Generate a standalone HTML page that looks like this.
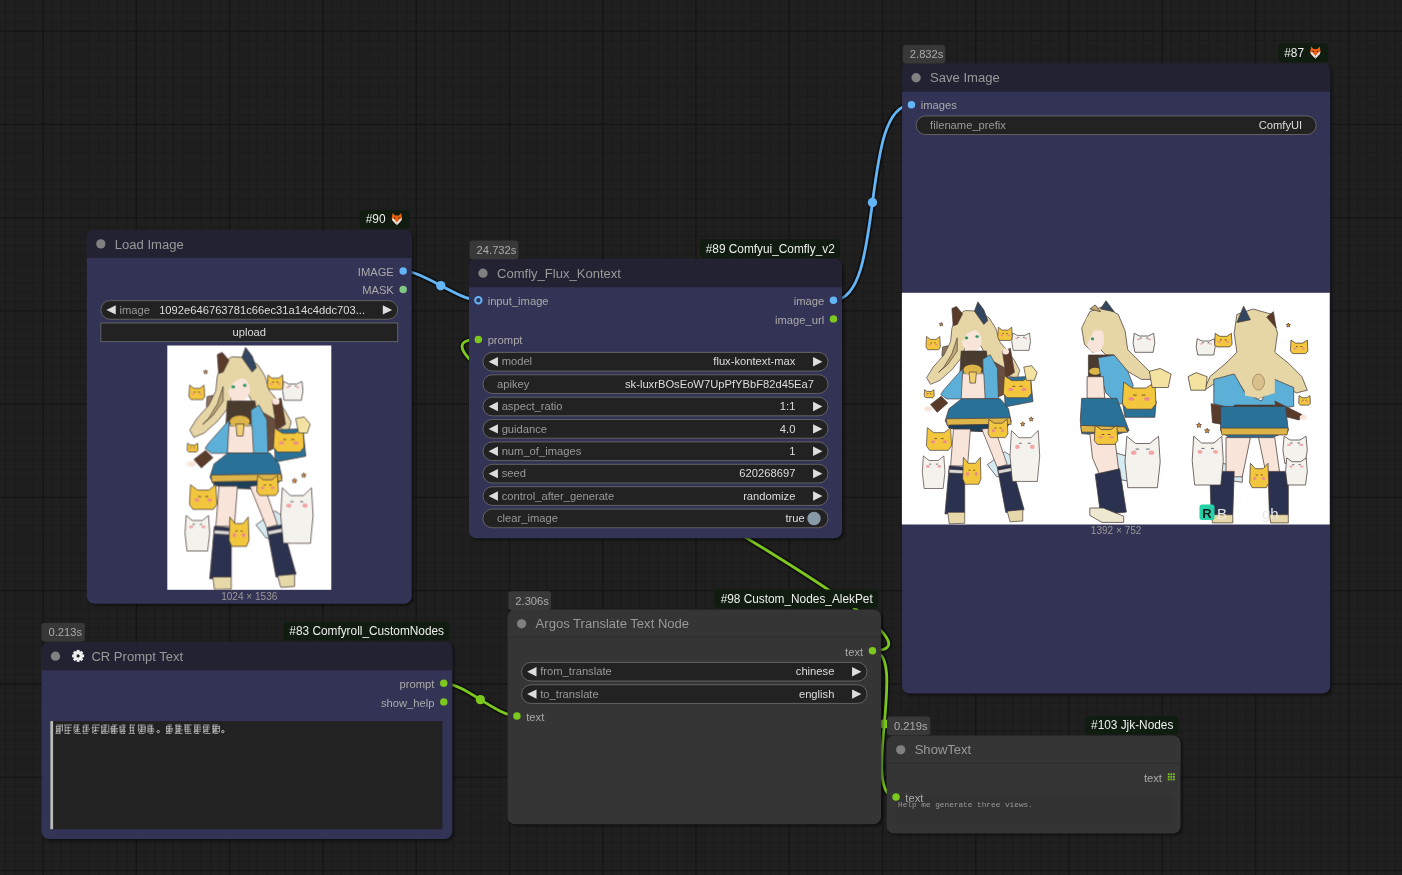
<!DOCTYPE html>
<html><head><meta charset="utf-8"><title>ComfyUI</title>
<style>html,body{margin:0;padding:0;background:#1f1f1f;overflow:hidden;width:1402px;height:875px}svg{display:block;will-change:transform}text{font-family:"Liberation Sans",sans-serif}.fig polygon{stroke:#4a3c3a;stroke-width:0.75;stroke-linejoin:round}</style>
</head><body>
<svg width="1402" height="875" viewBox="0 0 1402 875" font-family="Liberation Sans, sans-serif">
<defs><filter id="blur" x="-5%" y="-5%" width="110%" height="110%"><feGaussianBlur stdDeviation="1.4"/></filter><filter id="soft" x="-2%" y="-2%" width="104%" height="104%"><feGaussianBlur stdDeviation="0.45"/></filter></defs>
<rect x="0" y="0" width="1402" height="875" fill="#1f1f1f"/>
<path d="M5.49 0V875M14.82 0V875M24.15 0V875M33.47 0V875M52.13 0V875M61.45 0V875M70.78 0V875M80.11 0V875M89.44 0V875M98.76 0V875M108.09 0V875M117.42 0V875M126.74 0V875M145.40 0V875M154.72 0V875M164.05 0V875M173.38 0V875M182.70 0V875M192.03 0V875M201.36 0V875M210.69 0V875M220.01 0V875M238.67 0V875M247.99 0V875M257.32 0V875M266.65 0V875M275.98 0V875M285.30 0V875M294.63 0V875M303.96 0V875M313.28 0V875M331.94 0V875M341.26 0V875M350.59 0V875M359.92 0V875M369.25 0V875M378.57 0V875M387.90 0V875M397.23 0V875M406.55 0V875M425.21 0V875M434.53 0V875M443.86 0V875M453.19 0V875M462.51 0V875M471.84 0V875M481.17 0V875M490.50 0V875M499.82 0V875M518.48 0V875M527.80 0V875M537.13 0V875M546.46 0V875M555.79 0V875M565.11 0V875M574.44 0V875M583.77 0V875M593.09 0V875M611.75 0V875M621.07 0V875M630.40 0V875M639.73 0V875M649.06 0V875M658.38 0V875M667.71 0V875M677.04 0V875M686.36 0V875M705.02 0V875M714.34 0V875M723.67 0V875M733.00 0V875M742.33 0V875M751.65 0V875M760.98 0V875M770.31 0V875M779.63 0V875M798.29 0V875M807.61 0V875M816.94 0V875M826.27 0V875M835.60 0V875M844.92 0V875M854.25 0V875M863.58 0V875M872.90 0V875M891.56 0V875M900.88 0V875M910.21 0V875M919.54 0V875M928.87 0V875M938.19 0V875M947.52 0V875M956.85 0V875M966.17 0V875M984.83 0V875M994.15 0V875M1003.48 0V875M1012.81 0V875M1022.14 0V875M1031.46 0V875M1040.79 0V875M1050.12 0V875M1059.44 0V875M1078.10 0V875M1087.42 0V875M1096.75 0V875M1106.08 0V875M1115.40 0V875M1124.73 0V875M1134.06 0V875M1143.39 0V875M1152.71 0V875M1171.37 0V875M1180.69 0V875M1190.02 0V875M1199.35 0V875M1208.67 0V875M1218.00 0V875M1227.33 0V875M1236.66 0V875M1245.98 0V875M1264.64 0V875M1273.96 0V875M1283.29 0V875M1292.62 0V875M1301.94 0V875M1311.27 0V875M1320.60 0V875M1329.93 0V875M1339.25 0V875M1357.91 0V875M1367.23 0V875M1376.56 0V875M1385.89 0V875M1395.21 0V875M0 3.12H1402M0 12.45H1402M0 21.77H1402M0 40.43H1402M0 49.75H1402M0 59.08H1402M0 68.41H1402M0 77.73H1402M0 87.06H1402M0 96.39H1402M0 105.72H1402M0 115.04H1402M0 133.70H1402M0 143.02H1402M0 152.35H1402M0 161.68H1402M0 171.00H1402M0 180.33H1402M0 189.66H1402M0 198.99H1402M0 208.31H1402M0 226.97H1402M0 236.29H1402M0 245.62H1402M0 254.95H1402M0 264.28H1402M0 273.60H1402M0 282.93H1402M0 292.26H1402M0 301.58H1402M0 320.24H1402M0 329.56H1402M0 338.89H1402M0 348.22H1402M0 357.55H1402M0 366.87H1402M0 376.20H1402M0 385.53H1402M0 394.85H1402M0 413.51H1402M0 422.83H1402M0 432.16H1402M0 441.49H1402M0 450.81H1402M0 460.14H1402M0 469.47H1402M0 478.80H1402M0 488.12H1402M0 506.78H1402M0 516.10H1402M0 525.43H1402M0 534.76H1402M0 544.09H1402M0 553.41H1402M0 562.74H1402M0 572.07H1402M0 581.39H1402M0 600.05H1402M0 609.37H1402M0 618.70H1402M0 628.03H1402M0 637.36H1402M0 646.68H1402M0 656.01H1402M0 665.34H1402M0 674.66H1402M0 693.32H1402M0 702.64H1402M0 711.97H1402M0 721.30H1402M0 730.62H1402M0 739.95H1402M0 749.28H1402M0 758.61H1402M0 767.93H1402M0 786.59H1402M0 795.91H1402M0 805.24H1402M0 814.57H1402M0 823.89H1402M0 833.22H1402M0 842.55H1402M0 851.88H1402M0 861.20H1402" stroke="#1c1c1c" stroke-width="1" fill="none"/>
<path d="M43.10 0V875M0 31.10H1402M136.37 0V875M0 124.37H1402M229.64 0V875M0 217.64H1402M322.91 0V875M0 310.91H1402M416.18 0V875M0 404.18H1402M509.45 0V875M0 497.45H1402M602.72 0V875M0 590.72H1402M695.99 0V875M0 683.99H1402M789.26 0V875M0 777.26H1402M882.53 0V875M0 870.53H1402M975.80 0V875M1069.07 0V875M1162.34 0V875M1255.61 0V875M1348.88 0V875" stroke="#151515" stroke-width="1.3" fill="none"/>
<path d="M403.17 270.94C423.34 270.94 458.16 300.24 478.33 300.24" stroke="rgba(0,0,0,0.45)" stroke-width="6.53" fill="none" stroke-linecap="round"/>
<path d="M403.17 270.94C423.34 270.94 458.16 300.24 478.33 300.24" stroke="#64B5F6" stroke-width="2.80" fill="none" stroke-linecap="round"/>
<circle cx="440.75" cy="285.59" r="4.66" fill="#64B5F6"/>
<path d="M833.47 300.24C886.08 300.24 858.82 104.79 911.43 104.79" stroke="rgba(0,0,0,0.45)" stroke-width="6.53" fill="none" stroke-linecap="round"/>
<path d="M833.47 300.24C886.08 300.24 858.82 104.79 911.43 104.79" stroke="#64B5F6" stroke-width="2.80" fill="none" stroke-linecap="round"/>
<circle cx="872.45" cy="202.51" r="4.66" fill="#64B5F6"/>
<path d="M443.77 683.24C463.81 683.24 496.89 716.00 516.93 716.00" stroke="rgba(0,0,0,0.45)" stroke-width="6.53" fill="none" stroke-linecap="round"/>
<path d="M443.77 683.24C463.81 683.24 496.89 716.00 516.93 716.00" stroke="#7DC81E" stroke-width="2.80" fill="none" stroke-linecap="round"/>
<circle cx="480.35" cy="699.62" r="4.66" fill="#7DC81E"/>
<path d="M872.47 650.84C998.06 650.84 352.74 339.40 478.33 339.40" stroke="rgba(0,0,0,0.45)" stroke-width="6.53" fill="none" stroke-linecap="round"/>
<path d="M872.47 650.84C998.06 650.84 352.74 339.40 478.33 339.40" stroke="#7DC81E" stroke-width="2.80" fill="none" stroke-linecap="round"/>
<circle cx="675.40" cy="495.12" r="4.66" fill="#7DC81E"/>
<path d="M872.47 650.84C909.46 650.84 859.04 796.90 896.03 796.90" stroke="rgba(0,0,0,0.45)" stroke-width="6.53" fill="none" stroke-linecap="round"/>
<path d="M872.47 650.84C909.46 650.84 859.04 796.90 896.03 796.90" stroke="#7DC81E" stroke-width="2.80" fill="none" stroke-linecap="round"/>
<circle cx="884.25" cy="723.87" r="4.66" fill="#7DC81E"/>
<rect x="88.75" y="231.80" width="324.85" height="373.90" rx="7.46" fill="rgba(0,0,0,0.5)" filter="url(#blur)"/>
<rect x="86.85" y="229.90" width="324.85" height="373.90" rx="7.46" fill="#333355"/>
<path d="M86.85 257.88V237.36A7.46 7.46 0 0 1 94.31 229.90H404.24A7.46 7.46 0 0 1 411.70 237.36V257.88Z" fill="#222233"/>
<circle cx="100.84" cy="243.89" r="4.66" fill="#808080"/>
<text x="114.83" y="248.55" font-size="13.06" fill="#999">Load Image</text>
<circle cx="403.17" cy="270.94" r="3.73" fill="#64B5F6"/>
<text x="393.85" y="275.60" font-size="11.19" fill="#AAA" text-anchor="end">IMAGE</text>
<circle cx="403.17" cy="289.59" r="3.73" fill="#81C784"/>
<text x="393.85" y="294.26" font-size="11.19" fill="#AAA" text-anchor="end">MASK</text>
<rect x="100.84" y="300.60" width="296.87" height="18.65" rx="9.33" fill="#222" stroke="#666" stroke-width="0.93"/>
<path d="M115.76 305.26L106.44 309.93L115.76 314.59Z" fill="#DDD"/>
<path d="M382.79 305.26L392.11 309.93L382.79 314.59Z" fill="#DDD"/>
<text x="119.49" y="313.66" font-size="11.19" fill="#999">image</text>
<text x="365.07" y="313.66" font-size="11.19" fill="#DDD" text-anchor="end">1092e646763781c66ec31a14c4ddc703...</text>
<rect x="100.84" y="323.00" width="296.87" height="18.65" fill="#222" stroke="#666" stroke-width="0.93"/>
<text x="249.28" y="336.06" font-size="11.19" fill="#DDD" text-anchor="middle">upload</text>
<g><rect x="167.3" y="345.5" width="164.0" height="244.3" fill="#fff"/><svg x="167.3" y="345.5" width="164.0" height="244.3" overflow="hidden"><g transform="translate(-167.3 -345.5)"><g class="fig" filter="url(#soft)"><polygon points="207.1,396.7 212.9,395.3 213.6,411.2 208.6,415.6 206.4,405.4" fill="#8a7460" /><polygon points="221.6,363.3 231.8,356.8 246.3,357.5 257.9,364.8 265.2,376.4 269.5,390.9 278.2,401.1 285.5,411.2 291.3,422.1 288.4,431.6 276.8,427.2 265.2,415.6 255.0,406.9 246.3,390.9 233.2,390.9 228.9,406.9 217.3,421.4 204.2,433.0 194.0,437.4 189.7,430.1 196.9,418.5 208.6,405.4 215.8,390.9 217.3,376.4" fill="#e6d6a6" stroke="#6a5a40" stroke-width="0.5"/><polygon points="223.1,386.6 217.3,404.0 208.6,418.5 202.7,424.3 212.9,415.6 223.1,401.1" fill="#bfa874" /><polygon points="217.3,354.6 222.3,352.4 228.9,360.4 223.1,372.0 218.7,373.5" fill="#5a3b2b" /><polygon points="241.9,357.5 245.6,347.4 252.1,356.1 256.5,367.7 252.1,372.0" fill="#33465e" /><ellipse cx="239.0" cy="389.5" rx="10.9" ry="12.3" fill="#f8e4d8" /><polygon points="226.0,379.3 234.7,367.7 246.3,367.7 255.0,376.4 257.9,389.5 252.1,382.2 246.3,377.8 240.5,378.6 233.2,382.2 228.9,390.9" fill="#e6d6a6" style="stroke:none"/><ellipse cx="233.2" cy="386.8" rx="1.9" ry="1.6" fill="#2f9a68" /><ellipse cx="244.8" cy="385.3" rx="1.9" ry="1.6" fill="#2f9a68" /><polygon points="227.4,401.0 255.0,401.0 257.9,424.3 226.0,424.3" fill="#4a3a2e" /><polygon points="208.6,443.2 228.9,420.3 231.8,453.3 211.5,453.3 205.1,448.5" fill="#5bb0d8" stroke="#245c80" stroke-width="0.6"/><polygon points="262.0,412.0 276.0,420.0 277.0,447.0 266.0,452.0" fill="#6a5040" /><polygon points="251.0,410.0 259.0,405.0 267.0,420.0 268.0,453.0 252.0,453.0" fill="#5bb0d8" stroke="#245c80" stroke-width="0.6"/><polygon points="228.9,425.8 252.1,425.8 253.6,453.3 227.4,453.3" fill="#f8e4d8" /><ellipse cx="239.8" cy="421.4" rx="10.0" ry="5.8" fill="#dcb446" /><polygon points="236.0,424.0 244.0,424.0 243.0,436.0 237.0,436.0" fill="#f0d070" /><polygon points="272.4,401.0 281.1,398.2 285.5,424.3 276.8,430.1" fill="#5a3b2b" /><ellipse cx="276.0" cy="401.5" rx="3.6" ry="3.2" fill="#f8e4d8" /><polygon points="194.0,459.4 205.6,450.4 212.9,457.7 201.3,467.9" fill="#5a3b2b" /><ellipse cx="191.6" cy="464.0" rx="4.5" ry="2.8" fill="#f8e4d8" /><polygon points="273.9,430.1 302.9,428.7 305.8,456.2 275.3,462.0" fill="#2a7198" /><polygon points="274.5,428.0 282.5,433.3 295.0,433.3 303.0,428.0 304.1,447.2 300.1,452.0 277.4,452.0 273.4,447.2" fill="#f2c63e" stroke="#a0782a" stroke-width="0.6"/><ellipse cx="281.6" cy="442.9" rx="2.6" ry="1.7" fill="#ee8c8c" /><ellipse cx="295.9" cy="442.9" rx="2.6" ry="1.7" fill="#ee8c8c" /><path d="M283.1 439.5h3.4M291.0 439.5h3.4" stroke="#5a3a18" stroke-width="0.8"/><polygon points="228.0,453.0 270.0,453.0 279.0,464.0 282.0,478.0 276.0,486.0 258.0,489.0 231.0,488.0 214.0,485.0 210.0,477.0 214.0,464.0" fill="#2a7198" stroke="#1d4a6c" stroke-width="0.6"/><polygon points="211.0,475.0 281.0,474.0 282.0,481.0 212.0,482.0" fill="#dcb446" /><polygon points="215.0,482.0 278.0,481.0 276.0,486.0 258.0,489.0 231.0,488.0 214.0,485.0" fill="#1f3f5a" /><polygon points="256.0,525.0 275.0,510.9 288.4,520.0 286.0,540.2 266.0,538.0" fill="#d6eaf2" /><polygon points="219.0,486.2 237.5,486.2 234.4,526.3 215.9,526.3" fill="#f8e4d8" /><polygon points="249.9,486.2 263.7,484.7 277.6,524.8 266.8,527.9" fill="#f8e4d8" /><polygon points="214.4,526.3 231.3,527.9 231.3,577.2 209.7,578.8" fill="#2a3350" /><polygon points="266.8,527.9 282.2,524.8 296.1,574.2 276.1,577.2" fill="#2a3350" /><polygon points="214.4,530.0 231.3,531.0 231.3,535.0 214.0,534.0" fill="#d8d8d8" /><polygon points="267.5,531.0 283.0,528.0 284.0,532.0 268.5,535.0" fill="#d8d8d8" /><polygon points="212.8,577.0 231.3,577.0 231.3,589.0 214.4,589.5" fill="#e6d8a8" /><polygon points="277.6,575.7 294.6,574.2 294.6,586.5 280.7,587.3" fill="#e6d8a8" /><polygon points="189.6,385.1 193.7,388.3 200.0,388.3 204.1,385.1 204.7,396.7 202.7,399.6 191.0,399.6 189.0,396.7" fill="#f2c63e" stroke="#a0782a" stroke-width="0.6"/><ellipse cx="193.2" cy="394.1" rx="1.3" ry="1.0" fill="#ee8c8c" /><ellipse cx="200.5" cy="394.1" rx="1.3" ry="1.0" fill="#ee8c8c" /><path d="M193.9 392.1h1.7M198.0 392.1h1.7" stroke="#5a3a18" stroke-width="0.8"/><polygon points="268.0,375.0 272.1,378.2 278.5,378.2 282.6,375.0 283.2,386.6 281.1,389.5 269.5,389.5 267.4,386.6" fill="#f2c63e" stroke="#a0782a" stroke-width="0.6"/><ellipse cx="271.6" cy="384.0" rx="1.3" ry="1.0" fill="#ee8c8c" /><ellipse cx="279.0" cy="384.0" rx="1.3" ry="1.0" fill="#ee8c8c" /><path d="M272.4 382.0h1.8M276.5 382.0h1.8" stroke="#5a3a18" stroke-width="0.8"/><polygon points="283.6,381.4 288.7,384.0 296.9,384.0 302.0,381.4 303.0,390.9 301.4,400.3 284.2,400.3 282.6,390.9" fill="#f4f2ec" stroke="#9aa6b0" stroke-width="0.6"/><ellipse cx="287.7" cy="387.4" rx="1.6" ry="0.8" fill="#f2a5a5" /><ellipse cx="297.9" cy="387.4" rx="1.6" ry="0.8" fill="#f2a5a5" /><path d="M288.7 386.1h2.0M294.8 386.1h2.0" stroke="#445" stroke-width="0.8"/><polygon points="187.5,443.2 190.3,445.1 194.8,445.1 197.6,443.2 198.0,450.2 196.6,451.9 188.5,451.9 187.1,450.2" fill="#f2c63e" stroke="#a0782a" stroke-width="0.6"/><ellipse cx="190.0" cy="448.6" rx="0.9" ry="0.6" fill="#ee8c8c" /><ellipse cx="195.1" cy="448.6" rx="0.9" ry="0.6" fill="#ee8c8c" /><path d="M190.5 447.4h1.2M193.4 447.4h1.2" stroke="#5a3a18" stroke-width="0.8"/><polygon points="295.7,418.5 304.4,417.0 310.2,424.3 307.3,433.0 298.6,433.0" fill="#f4e2a0" stroke="#b8a060" stroke-width="0.5"/><polygon points="205.6,369.8 206.2,371.2 207.7,371.3 206.5,372.3 206.9,373.8 205.6,373.0 204.3,373.8 204.7,372.3 203.5,371.3 205.0,371.2" fill="#f29a2e" /><polygon points="190.5,484.7 197.6,490.1 208.8,490.1 215.9,484.7 216.9,504.5 213.4,509.4 193.0,509.4 189.5,504.5" fill="#f2c63e" stroke="#a0782a" stroke-width="0.6"/><ellipse cx="196.8" cy="500.0" rx="2.3" ry="1.7" fill="#ee8c8c" /><ellipse cx="209.6" cy="500.0" rx="2.3" ry="1.7" fill="#ee8c8c" /><path d="M198.1 496.6h3.0M205.2 496.6h3.0" stroke="#5a3a18" stroke-width="0.8"/><polygon points="186.2,515.5 192.4,520.5 202.3,520.5 208.5,515.5 209.7,533.2 207.7,551.0 187.0,551.0 185.0,533.2" fill="#f4f2ec" stroke="#9aa6b0" stroke-width="0.6"/><ellipse cx="191.2" cy="526.9" rx="2.0" ry="1.4" fill="#f2a5a5" /><ellipse cx="203.5" cy="526.9" rx="2.0" ry="1.4" fill="#f2a5a5" /><path d="M192.4 524.4h2.5M199.8 524.4h2.5" stroke="#445" stroke-width="0.8"/><polygon points="229.8,517.0 235.0,523.5 243.1,523.5 248.3,517.0 249.0,540.5 246.5,546.4 231.7,546.4 229.1,540.5" fill="#f2c63e" stroke="#a0782a" stroke-width="0.6"/><ellipse cx="234.4" cy="535.2" rx="1.7" ry="2.1" fill="#ee8c8c" /><ellipse cx="243.7" cy="535.2" rx="1.7" ry="2.1" fill="#ee8c8c" /><path d="M235.4 531.1h2.2M240.5 531.1h2.2" stroke="#5a3a18" stroke-width="0.8"/><polygon points="282.3,487.8 290.4,495.6 303.4,495.6 311.5,487.8 313.1,515.5 310.5,543.3 283.3,543.3 280.7,515.5" fill="#f4f2ec" stroke="#9aa6b0" stroke-width="0.6"/><ellipse cx="288.8" cy="505.6" rx="2.6" ry="2.2" fill="#f2a5a5" /><ellipse cx="305.0" cy="505.6" rx="2.6" ry="2.2" fill="#f2a5a5" /><path d="M290.4 501.7h3.2M300.1 501.7h3.2" stroke="#445" stroke-width="0.8"/><polygon points="257.6,475.4 263.2,479.8 272.0,479.8 277.6,475.4 278.4,491.5 275.6,495.5 259.6,495.5 256.8,491.5" fill="#f2c63e" stroke="#a0782a" stroke-width="0.6"/><ellipse cx="262.6" cy="487.9" rx="1.8" ry="1.4" fill="#ee8c8c" /><ellipse cx="272.6" cy="487.9" rx="1.8" ry="1.4" fill="#ee8c8c" /><path d="M263.6 485.0h2.4M269.2 485.0h2.4" stroke="#5a3a18" stroke-width="0.8"/><polygon points="294.6,478.2 295.3,479.9 297.1,480.0 295.7,481.2 296.1,482.9 294.6,482.0 293.1,482.9 293.5,481.2 292.1,480.0 293.9,479.9" fill="#f29a2e" /><polygon points="303.8,472.8 304.5,474.5 306.3,474.6 304.9,475.8 305.3,477.5 303.8,476.6 302.3,477.5 302.7,475.8 301.3,474.6 303.1,474.5" fill="#f29a2e" /></g></g></svg></g>
<text x="249.28" y="599.5" font-size="10.07" fill="#999" text-anchor="middle">1024 × 1536</text>
<rect x="359.93" y="210.00" width="49.77" height="18.65" rx="4" fill="#0f1c0f"/>
<text x="365.73" y="223.30" font-size="11.85" fill="#EEE">#90</text>
<polygon points="392.60,213.00 395.10,215.60 398.70,215.60 401.20,213.00 402.00,218.00 401.30,220.40 396.90,225.30 392.50,220.40 391.80,218.00" fill="#e8600e"/>
<polygon points="391.80,218.20 394.10,219.10 395.70,221.00 396.90,222.40 398.10,221.00 399.70,219.10 402.00,218.20 401.30,220.60 396.90,225.30 392.50,220.60" fill="#e4e4ea"/>
<circle cx="394.80" cy="218.00" r="0.7" fill="#3a1a08"/>
<circle cx="399.00" cy="218.00" r="0.7" fill="#3a1a08"/>
<polygon points="396.00,223.80 397.80,223.80 396.90,225.30" fill="#666"/>
<rect x="470.90" y="261.10" width="373.00" height="279.10" rx="7.46" fill="rgba(0,0,0,0.5)" filter="url(#blur)"/>
<rect x="469.00" y="259.20" width="373.00" height="279.10" rx="7.46" fill="#333355"/>
<path d="M469.00 287.18V266.66A7.46 7.46 0 0 1 476.46 259.20H834.54A7.46 7.46 0 0 1 842.00 266.66V287.18Z" fill="#222233"/>
<circle cx="482.99" cy="273.19" r="4.66" fill="#808080"/>
<text x="496.98" y="277.85" font-size="13.06" fill="#999">Comfly_Flux_Kontext</text>
<circle cx="478.33" cy="300.24" r="3.20" fill="none" stroke="#64B5F6" stroke-width="2"/>
<text x="487.65" y="304.90" font-size="11.19" fill="#AAA">input_image</text>
<circle cx="478.33" cy="339.40" r="3.73" fill="#7DC81E"/>
<text x="487.65" y="344.06" font-size="11.19" fill="#AAA">prompt</text>
<circle cx="833.47" cy="300.24" r="3.73" fill="#64B5F6"/>
<text x="824.15" y="304.90" font-size="11.19" fill="#AAA" text-anchor="end">image</text>
<circle cx="833.47" cy="318.89" r="3.73" fill="#7DC81E"/>
<text x="824.15" y="323.56" font-size="11.19" fill="#AAA" text-anchor="end">image_url</text>
<rect x="482.99" y="352.40" width="345.02" height="18.65" rx="9.33" fill="#222" stroke="#666" stroke-width="0.93"/>
<path d="M497.91 357.06L488.59 361.73L497.91 366.39Z" fill="#DDD"/>
<path d="M813.09 357.06L822.41 361.73L813.09 366.39Z" fill="#DDD"/>
<text x="501.64" y="365.46" font-size="11.19" fill="#999">model</text>
<text x="795.37" y="365.46" font-size="11.19" fill="#DDD" text-anchor="end">flux-kontext-max</text>
<rect x="482.99" y="374.78" width="345.02" height="18.65" rx="9.33" fill="#222" stroke="#666" stroke-width="0.93"/>
<text x="496.98" y="387.84" font-size="11.19" fill="#999">apikey</text>
<text x="814.02" y="387.84" font-size="11.19" fill="#DDD" text-anchor="end">sk-luxrBOsEoW7UpPfYBbF82d45Ea7</text>
<rect x="482.99" y="397.17" width="345.02" height="18.65" rx="9.33" fill="#222" stroke="#666" stroke-width="0.93"/>
<path d="M497.91 401.83L488.59 406.50L497.91 411.16Z" fill="#DDD"/>
<path d="M813.09 401.83L822.41 406.50L813.09 411.16Z" fill="#DDD"/>
<text x="501.64" y="410.23" font-size="11.19" fill="#999">aspect_ratio</text>
<text x="795.37" y="410.23" font-size="11.19" fill="#DDD" text-anchor="end">1:1</text>
<rect x="482.99" y="419.55" width="345.02" height="18.65" rx="9.33" fill="#222" stroke="#666" stroke-width="0.93"/>
<path d="M497.91 424.22L488.59 428.88L497.91 433.54Z" fill="#DDD"/>
<path d="M813.09 424.22L822.41 428.88L813.09 433.54Z" fill="#DDD"/>
<text x="501.64" y="432.61" font-size="11.19" fill="#999">guidance</text>
<text x="795.37" y="432.61" font-size="11.19" fill="#DDD" text-anchor="end">4.0</text>
<rect x="482.99" y="441.94" width="345.02" height="18.65" rx="9.33" fill="#222" stroke="#666" stroke-width="0.93"/>
<path d="M497.91 446.60L488.59 451.27L497.91 455.93Z" fill="#DDD"/>
<path d="M813.09 446.60L822.41 451.27L813.09 455.93Z" fill="#DDD"/>
<text x="501.64" y="455.00" font-size="11.19" fill="#999">num_of_images</text>
<text x="795.37" y="455.00" font-size="11.19" fill="#DDD" text-anchor="end">1</text>
<rect x="482.99" y="464.32" width="345.02" height="18.65" rx="9.33" fill="#222" stroke="#666" stroke-width="0.93"/>
<path d="M497.91 468.99L488.59 473.65L497.91 478.31Z" fill="#DDD"/>
<path d="M813.09 468.99L822.41 473.65L813.09 478.31Z" fill="#DDD"/>
<text x="501.64" y="477.38" font-size="11.19" fill="#999">seed</text>
<text x="795.37" y="477.38" font-size="11.19" fill="#DDD" text-anchor="end">620268697</text>
<rect x="482.99" y="486.71" width="345.02" height="18.65" rx="9.33" fill="#222" stroke="#666" stroke-width="0.93"/>
<path d="M497.91 491.37L488.59 496.04L497.91 500.70Z" fill="#DDD"/>
<path d="M813.09 491.37L822.41 496.04L813.09 500.70Z" fill="#DDD"/>
<text x="501.64" y="499.77" font-size="11.19" fill="#999">control_after_generate</text>
<text x="795.37" y="499.77" font-size="11.19" fill="#DDD" text-anchor="end">randomize</text>
<rect x="482.99" y="509.09" width="345.02" height="18.65" rx="9.33" fill="#222" stroke="#666" stroke-width="0.93"/>
<circle cx="814.02" cy="518.42" r="6.72" fill="#89A"/>
<text x="496.98" y="522.15" font-size="11.19" fill="#999">clear_image</text>
<text x="804.69" y="522.15" font-size="11.19" fill="#DDD" text-anchor="end">true</text>
<rect x="469.60" y="240.60" width="49.00" height="18.65" rx="3" fill="#383838"/>
<text x="476.60" y="253.80" font-size="11.2" fill="#AAA">24.732s</text>
<rect x="699.92" y="239.30" width="140.08" height="18.65" rx="4" fill="#0f1c0f"/>
<text x="705.72" y="252.60" font-size="11.85" fill="#EEE">#89 Comfyui_Comfly_v2</text>
<rect x="904.00" y="65.65" width="428.10" height="629.75" rx="7.46" fill="rgba(0,0,0,0.5)" filter="url(#blur)"/>
<rect x="902.10" y="63.75" width="428.10" height="629.75" rx="7.46" fill="#333355"/>
<path d="M902.10 91.73V71.21A7.46 7.46 0 0 1 909.56 63.75H1322.74A7.46 7.46 0 0 1 1330.20 71.21V91.73Z" fill="#222233"/>
<circle cx="916.09" cy="77.74" r="4.66" fill="#808080"/>
<text x="930.08" y="82.40" font-size="13.06" fill="#999">Save Image</text>
<circle cx="911.43" cy="104.79" r="3.73" fill="#64B5F6"/>
<text x="920.75" y="109.45" font-size="11.19" fill="#AAA">images</text>
<rect x="916.09" y="115.90" width="400.12" height="18.65" rx="9.33" fill="#222" stroke="#666" stroke-width="0.93"/>
<text x="930.08" y="128.96" font-size="11.19" fill="#999">filename_prefix</text>
<text x="1302.22" y="128.96" font-size="11.19" fill="#DDD" text-anchor="end">ComfyUI</text>
<g><rect x="901.9" y="292.8" width="427.8" height="231.7" fill="#fff"/><g class="fig" filter="url(#soft)"><g transform="matrix(0.91659 0 0 0.91659 752.73 -16.55)"><polygon points="207.1,396.7 212.9,395.3 213.6,411.2 208.6,415.6 206.4,405.4" fill="#8a7460" /><polygon points="221.6,363.3 231.8,356.8 246.3,357.5 257.9,364.8 265.2,376.4 269.5,390.9 278.2,401.1 285.5,411.2 291.3,422.1 288.4,431.6 276.8,427.2 265.2,415.6 255.0,406.9 246.3,390.9 233.2,390.9 228.9,406.9 217.3,421.4 204.2,433.0 194.0,437.4 189.7,430.1 196.9,418.5 208.6,405.4 215.8,390.9 217.3,376.4" fill="#e6d6a6" stroke="#6a5a40" stroke-width="0.5"/><polygon points="223.1,386.6 217.3,404.0 208.6,418.5 202.7,424.3 212.9,415.6 223.1,401.1" fill="#bfa874" /><polygon points="217.3,354.6 222.3,352.4 228.9,360.4 223.1,372.0 218.7,373.5" fill="#5a3b2b" /><polygon points="241.9,357.5 245.6,347.4 252.1,356.1 256.5,367.7 252.1,372.0" fill="#33465e" /><ellipse cx="239.0" cy="389.5" rx="10.9" ry="12.3" fill="#f8e4d8" /><polygon points="226.0,379.3 234.7,367.7 246.3,367.7 255.0,376.4 257.9,389.5 252.1,382.2 246.3,377.8 240.5,378.6 233.2,382.2 228.9,390.9" fill="#e6d6a6" style="stroke:none"/><ellipse cx="233.2" cy="386.8" rx="1.9" ry="1.6" fill="#2f9a68" /><ellipse cx="244.8" cy="385.3" rx="1.9" ry="1.6" fill="#2f9a68" /><polygon points="227.4,401.0 255.0,401.0 257.9,424.3 226.0,424.3" fill="#4a3a2e" /><polygon points="208.6,443.2 228.9,420.3 231.8,453.3 211.5,453.3 205.1,448.5" fill="#5bb0d8" stroke="#245c80" stroke-width="0.6"/><polygon points="262.0,412.0 276.0,420.0 277.0,447.0 266.0,452.0" fill="#6a5040" /><polygon points="251.0,410.0 259.0,405.0 267.0,420.0 268.0,453.0 252.0,453.0" fill="#5bb0d8" stroke="#245c80" stroke-width="0.6"/><polygon points="228.9,425.8 252.1,425.8 253.6,453.3 227.4,453.3" fill="#f8e4d8" /><ellipse cx="239.8" cy="421.4" rx="10.0" ry="5.8" fill="#dcb446" /><polygon points="236.0,424.0 244.0,424.0 243.0,436.0 237.0,436.0" fill="#f0d070" /><polygon points="272.4,401.0 281.1,398.2 285.5,424.3 276.8,430.1" fill="#5a3b2b" /><ellipse cx="276.0" cy="401.5" rx="3.6" ry="3.2" fill="#f8e4d8" /><polygon points="194.0,459.4 205.6,450.4 212.9,457.7 201.3,467.9" fill="#5a3b2b" /><ellipse cx="191.6" cy="464.0" rx="4.5" ry="2.8" fill="#f8e4d8" /><polygon points="273.9,430.1 302.9,428.7 305.8,456.2 275.3,462.0" fill="#2a7198" /><polygon points="274.5,428.0 282.5,433.3 295.0,433.3 303.0,428.0 304.1,447.2 300.1,452.0 277.4,452.0 273.4,447.2" fill="#f2c63e" stroke="#a0782a" stroke-width="0.6"/><ellipse cx="281.6" cy="442.9" rx="2.6" ry="1.7" fill="#ee8c8c" /><ellipse cx="295.9" cy="442.9" rx="2.6" ry="1.7" fill="#ee8c8c" /><path d="M283.1 439.5h3.4M291.0 439.5h3.4" stroke="#5a3a18" stroke-width="0.8"/><polygon points="228.0,453.0 270.0,453.0 279.0,464.0 282.0,478.0 276.0,486.0 258.0,489.0 231.0,488.0 214.0,485.0 210.0,477.0 214.0,464.0" fill="#2a7198" stroke="#1d4a6c" stroke-width="0.6"/><polygon points="211.0,475.0 281.0,474.0 282.0,481.0 212.0,482.0" fill="#dcb446" /><polygon points="215.0,482.0 278.0,481.0 276.0,486.0 258.0,489.0 231.0,488.0 214.0,485.0" fill="#1f3f5a" /><polygon points="256.0,525.0 275.0,510.9 288.4,520.0 286.0,540.2 266.0,538.0" fill="#d6eaf2" /><polygon points="219.0,486.2 237.5,486.2 234.4,526.3 215.9,526.3" fill="#f8e4d8" /><polygon points="249.9,486.2 263.7,484.7 277.6,524.8 266.8,527.9" fill="#f8e4d8" /><polygon points="214.4,526.3 231.3,527.9 231.3,577.2 209.7,578.8" fill="#2a3350" /><polygon points="266.8,527.9 282.2,524.8 296.1,574.2 276.1,577.2" fill="#2a3350" /><polygon points="214.4,530.0 231.3,531.0 231.3,535.0 214.0,534.0" fill="#d8d8d8" /><polygon points="267.5,531.0 283.0,528.0 284.0,532.0 268.5,535.0" fill="#d8d8d8" /><polygon points="212.8,577.0 231.3,577.0 231.3,589.0 214.4,589.5" fill="#e6d8a8" /><polygon points="277.6,575.7 294.6,574.2 294.6,586.5 280.7,587.3" fill="#e6d8a8" /><polygon points="189.6,385.1 193.7,388.3 200.0,388.3 204.1,385.1 204.7,396.7 202.7,399.6 191.0,399.6 189.0,396.7" fill="#f2c63e" stroke="#a0782a" stroke-width="0.6"/><ellipse cx="193.2" cy="394.1" rx="1.3" ry="1.0" fill="#ee8c8c" /><ellipse cx="200.5" cy="394.1" rx="1.3" ry="1.0" fill="#ee8c8c" /><path d="M193.9 392.1h1.7M198.0 392.1h1.7" stroke="#5a3a18" stroke-width="0.8"/><polygon points="268.0,375.0 272.1,378.2 278.5,378.2 282.6,375.0 283.2,386.6 281.1,389.5 269.5,389.5 267.4,386.6" fill="#f2c63e" stroke="#a0782a" stroke-width="0.6"/><ellipse cx="271.6" cy="384.0" rx="1.3" ry="1.0" fill="#ee8c8c" /><ellipse cx="279.0" cy="384.0" rx="1.3" ry="1.0" fill="#ee8c8c" /><path d="M272.4 382.0h1.8M276.5 382.0h1.8" stroke="#5a3a18" stroke-width="0.8"/><polygon points="283.6,381.4 288.7,384.0 296.9,384.0 302.0,381.4 303.0,390.9 301.4,400.3 284.2,400.3 282.6,390.9" fill="#f4f2ec" stroke="#9aa6b0" stroke-width="0.6"/><ellipse cx="287.7" cy="387.4" rx="1.6" ry="0.8" fill="#f2a5a5" /><ellipse cx="297.9" cy="387.4" rx="1.6" ry="0.8" fill="#f2a5a5" /><path d="M288.7 386.1h2.0M294.8 386.1h2.0" stroke="#445" stroke-width="0.8"/><polygon points="187.5,443.2 190.3,445.1 194.8,445.1 197.6,443.2 198.0,450.2 196.6,451.9 188.5,451.9 187.1,450.2" fill="#f2c63e" stroke="#a0782a" stroke-width="0.6"/><ellipse cx="190.0" cy="448.6" rx="0.9" ry="0.6" fill="#ee8c8c" /><ellipse cx="195.1" cy="448.6" rx="0.9" ry="0.6" fill="#ee8c8c" /><path d="M190.5 447.4h1.2M193.4 447.4h1.2" stroke="#5a3a18" stroke-width="0.8"/><polygon points="295.7,418.5 304.4,417.0 310.2,424.3 307.3,433.0 298.6,433.0" fill="#f4e2a0" stroke="#b8a060" stroke-width="0.5"/><polygon points="205.6,369.8 206.2,371.2 207.7,371.3 206.5,372.3 206.9,373.8 205.6,373.0 204.3,373.8 204.7,372.3 203.5,371.3 205.0,371.2" fill="#f29a2e" /><polygon points="190.5,484.7 197.6,490.1 208.8,490.1 215.9,484.7 216.9,504.5 213.4,509.4 193.0,509.4 189.5,504.5" fill="#f2c63e" stroke="#a0782a" stroke-width="0.6"/><ellipse cx="196.8" cy="500.0" rx="2.3" ry="1.7" fill="#ee8c8c" /><ellipse cx="209.6" cy="500.0" rx="2.3" ry="1.7" fill="#ee8c8c" /><path d="M198.1 496.6h3.0M205.2 496.6h3.0" stroke="#5a3a18" stroke-width="0.8"/><polygon points="186.2,515.5 192.4,520.5 202.3,520.5 208.5,515.5 209.7,533.2 207.7,551.0 187.0,551.0 185.0,533.2" fill="#f4f2ec" stroke="#9aa6b0" stroke-width="0.6"/><ellipse cx="191.2" cy="526.9" rx="2.0" ry="1.4" fill="#f2a5a5" /><ellipse cx="203.5" cy="526.9" rx="2.0" ry="1.4" fill="#f2a5a5" /><path d="M192.4 524.4h2.5M199.8 524.4h2.5" stroke="#445" stroke-width="0.8"/><polygon points="229.8,517.0 235.0,523.5 243.1,523.5 248.3,517.0 249.0,540.5 246.5,546.4 231.7,546.4 229.1,540.5" fill="#f2c63e" stroke="#a0782a" stroke-width="0.6"/><ellipse cx="234.4" cy="535.2" rx="1.7" ry="2.1" fill="#ee8c8c" /><ellipse cx="243.7" cy="535.2" rx="1.7" ry="2.1" fill="#ee8c8c" /><path d="M235.4 531.1h2.2M240.5 531.1h2.2" stroke="#5a3a18" stroke-width="0.8"/><polygon points="282.3,487.8 290.4,495.6 303.4,495.6 311.5,487.8 313.1,515.5 310.5,543.3 283.3,543.3 280.7,515.5" fill="#f4f2ec" stroke="#9aa6b0" stroke-width="0.6"/><ellipse cx="288.8" cy="505.6" rx="2.6" ry="2.2" fill="#f2a5a5" /><ellipse cx="305.0" cy="505.6" rx="2.6" ry="2.2" fill="#f2a5a5" /><path d="M290.4 501.7h3.2M300.1 501.7h3.2" stroke="#445" stroke-width="0.8"/><polygon points="257.6,475.4 263.2,479.8 272.0,479.8 277.6,475.4 278.4,491.5 275.6,495.5 259.6,495.5 256.8,491.5" fill="#f2c63e" stroke="#a0782a" stroke-width="0.6"/><ellipse cx="262.6" cy="487.9" rx="1.8" ry="1.4" fill="#ee8c8c" /><ellipse cx="272.6" cy="487.9" rx="1.8" ry="1.4" fill="#ee8c8c" /><path d="M263.6 485.0h2.4M269.2 485.0h2.4" stroke="#5a3a18" stroke-width="0.8"/><polygon points="294.6,478.2 295.3,479.9 297.1,480.0 295.7,481.2 296.1,482.9 294.6,482.0 293.1,482.9 293.5,481.2 292.1,480.0 293.9,479.9" fill="#f29a2e" /><polygon points="303.8,472.8 304.5,474.5 306.3,474.6 304.9,475.8 305.3,477.5 303.8,476.6 302.3,477.5 302.7,475.8 301.3,474.6 303.1,474.5" fill="#f29a2e" /></g><polygon points="1089.8,311.7 1103.3,306.3 1118.2,314.4 1125.0,330.6 1127.7,349.6 1138.5,360.4 1149.4,371.3 1153.4,379.4 1141.3,379.4 1127.7,371.3 1116.9,360.4 1112.8,355.0 1106.0,355.0 1100.6,349.6 1092.5,352.3 1084.4,344.2 1081.7,327.9" fill="#e6d6a6" stroke="#6a5a40" stroke-width="0.5"/><polygon points="1100.6,309.0 1106.0,300.8 1114.2,311.7" fill="#33465e" /><polygon points="1089.8,309.0 1095.2,304.9 1100.6,311.7" fill="#bfa874" /><ellipse cx="1095.2" cy="339.3" rx="9.0" ry="13.5" fill="#f8e4d8" /><polygon points="1083.0,327.9 1087.1,317.1 1103.3,314.4 1115.5,325.2 1114.2,344.2 1106.0,330.6 1093.9,330.6 1087.1,344.2" fill="#e6d6a6" style="stroke:none"/><ellipse cx="1092.5" cy="338.8" rx="1.6" ry="1.6" fill="#2f9a68" /><polygon points="1114.2,452.5 1133.1,457.9 1135.8,482.3 1119.6,479.6" fill="#d6eaf2" /><polygon points="1088.4,355.0 1114.2,355.0 1114.2,376.7 1088.4,376.7" fill="#4a3a2e" /><ellipse cx="1095.2" cy="371.3" rx="6.0" ry="3.5" fill="#dcb446" /><polygon points="1097.9,357.7 1114.2,355.0 1127.7,371.3 1133.1,384.8 1130.4,403.8 1116.9,403.8 1106.0,392.9 1100.6,376.7" fill="#5bb0d8" stroke="#245c80" stroke-width="0.6"/><polygon points="1087.1,376.7 1103.3,376.7 1104.7,398.3 1087.1,398.3" fill="#f8e4d8" /><polygon points="1122.3,401.1 1156.2,401.1 1154.8,417.3 1125.0,417.3" fill="#2a7198" /><polygon points="1123.7,382.1 1132.4,388.0 1146.1,388.0 1154.8,382.1 1156.0,403.8 1151.7,409.2 1126.8,409.2 1122.4,403.8" fill="#f2c63e" stroke="#a0782a" stroke-width="0.6"/><ellipse cx="1131.4" cy="398.9" rx="2.8" ry="1.9" fill="#ee8c8c" /><ellipse cx="1147.0" cy="398.9" rx="2.8" ry="1.9" fill="#ee8c8c" /><path d="M1133.0 395.1h3.7M1141.7 395.1h3.7" stroke="#5a3a18" stroke-width="0.8"/><polygon points="1081.7,398.3 1116.9,398.3 1129.1,430.8 1111.5,436.3 1081.7,433.6 1080.3,420.0" fill="#2a7198" stroke="#1d4a6c" stroke-width="0.6"/><polygon points="1080.6,425.4 1125.0,426.8 1127.7,432.2 1081.7,432.2" fill="#dcb446" /><polygon points="1089.8,433.6 1114.2,433.6 1119.6,476.9 1100.6,476.9 1092.5,457.9" fill="#f8e4d8" /><polygon points="1095.2,425.4 1101.3,429.6 1110.8,429.6 1116.9,425.4 1117.7,440.6 1114.7,444.4 1097.4,444.4 1094.3,440.6" fill="#f2c63e" stroke="#a0782a" stroke-width="0.6"/><ellipse cx="1100.6" cy="437.2" rx="2.0" ry="1.3" fill="#ee8c8c" /><ellipse cx="1111.5" cy="437.2" rx="2.0" ry="1.3" fill="#ee8c8c" /><path d="M1101.7 434.5h2.6M1107.8 434.5h2.6" stroke="#5a3a18" stroke-width="0.8"/><polygon points="1095.2,474.2 1119.6,468.8 1126.4,512.1 1100.6,514.8" fill="#2a3350" /><polygon points="1089.8,508.0 1103.3,508.0 1123.7,516.2 1123.7,522.4 1102.0,522.4 1089.8,515.4" fill="#efe8d0" /><polygon points="1126.8,436.3 1135.6,443.5 1149.7,443.5 1158.5,436.3 1160.2,462.0 1157.4,487.7 1127.8,487.7 1125.0,462.0" fill="#f4f2ec" stroke="#9aa6b0" stroke-width="0.6"/><ellipse cx="1133.8" cy="452.7" rx="2.8" ry="2.1" fill="#f2a5a5" /><ellipse cx="1151.4" cy="452.7" rx="2.8" ry="2.1" fill="#f2a5a5" /><path d="M1135.6 449.1h3.5M1146.1 449.1h3.5" stroke="#445" stroke-width="0.8"/><polygon points="1149.4,371.3 1160.2,368.5 1171.1,374.0 1168.3,387.5 1152.1,387.5" fill="#f4e2a0" stroke="#b8a060" stroke-width="0.5"/><polygon points="1134.2,333.3 1139.6,336.0 1148.3,336.0 1153.7,333.3 1154.8,342.8 1153.1,352.3 1134.9,352.3 1133.1,342.8" fill="#f4f2ec" stroke="#9aa6b0" stroke-width="0.6"/><ellipse cx="1138.5" cy="339.4" rx="1.7" ry="0.8" fill="#f2a5a5" /><ellipse cx="1149.4" cy="339.4" rx="1.7" ry="0.8" fill="#f2a5a5" /><path d="M1139.6 338.1h2.2M1146.1 338.1h2.2" stroke="#445" stroke-width="0.8"/><polygon points="1220.6,463.3 1242.3,466.0 1242.3,482.3 1223.3,479.5" fill="#d6eaf2" /><polygon points="1236.9,314.4 1253.1,309.0 1272.1,314.4 1277.5,333.3 1274.8,352.3 1288.3,363.1 1301.9,376.7 1307.3,390.2 1296.4,392.9 1282.9,384.8 1274.8,392.9 1258.5,398.3 1247.7,395.6 1239.6,384.8 1228.7,379.4 1212.5,384.8 1204.4,390.2 1209.8,376.7 1226.0,363.1 1236.9,352.3 1234.2,333.3" fill="#e6d6a6" stroke="#6a5a40" stroke-width="0.5"/><polygon points="1236.9,322.5 1243.6,306.2 1250.4,319.8" fill="#33465e" /><polygon points="1266.7,317.1 1273.4,311.7 1276.1,327.9" fill="#5a3b2b" /><polygon points="1213.8,379.4 1234.2,373.9 1245.0,392.9 1261.2,401.0 1274.8,379.4 1293.7,387.5 1293.7,406.4 1274.8,409.1 1234.2,409.1 1213.8,403.7" fill="#5bb0d8" stroke="#245c80" stroke-width="0.6"/><polygon points="1242.3,352.3 1274.8,352.3 1274.8,392.9 1258.5,398.3 1245.0,395.6" fill="#e6d6a6" style="stroke:none"/><ellipse cx="1258.5" cy="382.1" rx="6.0" ry="8.0" fill="#d9c08a" stroke="#8a7050" stroke-width="0.6"/><polygon points="1234.2,405.1 1274.8,405.1 1274.8,410.5 1234.2,410.5" fill="#4a3a2e" /><polygon points="1211.1,403.7 1234.2,409.1 1228.7,425.4 1212.5,422.7" fill="#5a3b2b" /><polygon points="1274.8,401.0 1301.9,414.6 1299.1,420.0 1277.5,414.6" fill="#5a3b2b" /><ellipse cx="1303.2" cy="417.3" rx="3.5" ry="2.5" fill="#f8e4d8" /><polygon points="1220.6,406.4 1285.6,406.4 1288.3,430.8 1272.1,437.6 1228.7,437.6 1220.6,430.8" fill="#2a7198" stroke="#1d4a6c" stroke-width="0.6"/><polygon points="1220.6,428.1 1288.3,428.1 1287.0,434.9 1222.0,434.9" fill="#dcb446" /><polygon points="1226.0,437.6 1250.4,437.6 1242.3,476.8 1226.0,476.8" fill="#f8e4d8" /><polygon points="1258.5,437.6 1274.8,437.6 1280.2,476.8 1266.7,476.8" fill="#f8e4d8" /><polygon points="1209.8,471.4 1234.2,471.4 1232.8,514.7 1211.1,514.7" fill="#2a3350" /><polygon points="1268.0,471.4 1288.3,471.4 1288.3,514.7 1269.4,514.7" fill="#2a3350" /><polygon points="1211.1,514.7 1232.8,514.7 1232.8,522.9 1212.5,522.9" fill="#e6d8a8" /><polygon points="1269.4,514.7 1288.3,514.7 1288.3,522.9 1270.7,522.9" fill="#e6d8a8" /><polygon points="1193.7,436.2 1201.5,443.0 1214.0,443.0 1221.8,436.2 1223.3,460.6 1220.8,485.0 1194.7,485.0 1192.2,460.6" fill="#f4f2ec" stroke="#9aa6b0" stroke-width="0.6"/><ellipse cx="1200.0" cy="451.8" rx="2.5" ry="1.9" fill="#f2a5a5" /><ellipse cx="1215.5" cy="451.8" rx="2.5" ry="1.9" fill="#f2a5a5" /><path d="M1201.5 448.4h3.1M1210.9 448.4h3.1" stroke="#445" stroke-width="0.8"/><polygon points="1284.1,436.2 1290.2,440.0 1300.0,440.0 1306.0,436.2 1307.3,449.8 1305.3,463.3 1284.8,463.3 1282.9,449.8" fill="#f4f2ec" stroke="#9aa6b0" stroke-width="0.6"/><ellipse cx="1289.0" cy="444.9" rx="1.9" ry="1.1" fill="#f2a5a5" /><ellipse cx="1301.2" cy="444.9" rx="1.9" ry="1.1" fill="#f2a5a5" /><path d="M1290.2 443.0h2.4M1297.5 443.0h2.4" stroke="#445" stroke-width="0.8"/><polygon points="1286.7,457.9 1292.1,461.7 1300.8,461.7 1306.2,457.9 1307.3,471.4 1305.5,485.0 1287.3,485.0 1285.6,471.4" fill="#f4f2ec" stroke="#9aa6b0" stroke-width="0.6"/><ellipse cx="1291.0" cy="466.6" rx="1.7" ry="1.1" fill="#f2a5a5" /><ellipse cx="1301.9" cy="466.6" rx="1.7" ry="1.1" fill="#f2a5a5" /><path d="M1292.1 464.7h2.2M1298.6 464.7h2.2" stroke="#445" stroke-width="0.8"/><polygon points="1250.4,463.3 1255.3,468.7 1263.1,468.7 1268.0,463.3 1268.7,482.8 1266.2,487.7 1252.2,487.7 1249.7,482.8" fill="#f2c63e" stroke="#a0782a" stroke-width="0.6"/><ellipse cx="1254.8" cy="478.4" rx="1.6" ry="1.7" fill="#ee8c8c" /><ellipse cx="1263.6" cy="478.4" rx="1.6" ry="1.7" fill="#ee8c8c" /><path d="M1255.7 475.0h2.1M1260.6 475.0h2.1" stroke="#5a3a18" stroke-width="0.8"/><polygon points="1197.2,338.7 1201.9,341.0 1209.5,341.0 1214.3,338.7 1215.2,346.9 1213.7,355.0 1197.8,355.0 1196.2,346.9" fill="#f4f2ec" stroke="#9aa6b0" stroke-width="0.6"/><ellipse cx="1201.0" cy="343.9" rx="1.5" ry="0.6" fill="#f2a5a5" /><ellipse cx="1210.5" cy="343.9" rx="1.5" ry="0.6" fill="#f2a5a5" /><path d="M1201.9 342.8h1.9M1207.6 342.8h1.9" stroke="#445" stroke-width="0.8"/><polygon points="1215.2,333.3 1219.8,336.3 1226.9,336.3 1231.4,333.3 1232.1,344.2 1229.8,346.9 1216.8,346.9 1214.6,344.2" fill="#f2c63e" stroke="#a0782a" stroke-width="0.6"/><ellipse cx="1219.3" cy="341.7" rx="1.5" ry="0.9" fill="#ee8c8c" /><ellipse cx="1227.4" cy="341.7" rx="1.5" ry="0.9" fill="#ee8c8c" /><path d="M1220.1 339.8h1.9M1224.6 339.8h1.9" stroke="#5a3a18" stroke-width="0.8"/><polygon points="1291.0,340.1 1295.6,343.1 1302.7,343.1 1307.3,340.1 1307.9,350.9 1305.6,353.6 1292.6,353.6 1290.4,350.9" fill="#f2c63e" stroke="#a0782a" stroke-width="0.6"/><ellipse cx="1295.1" cy="348.5" rx="1.5" ry="0.9" fill="#ee8c8c" /><ellipse cx="1303.2" cy="348.5" rx="1.5" ry="0.9" fill="#ee8c8c" /><path d="M1295.9 346.6h1.9M1300.4 346.6h1.9" stroke="#5a3a18" stroke-width="0.8"/><polygon points="1299.1,395.6 1302.2,397.7 1306.9,397.7 1310.0,395.6 1310.4,403.2 1308.9,405.1 1300.2,405.1 1298.7,403.2" fill="#f2c63e" stroke="#a0782a" stroke-width="0.6"/><ellipse cx="1301.9" cy="401.5" rx="1.0" ry="0.7" fill="#ee8c8c" /><ellipse cx="1307.3" cy="401.5" rx="1.0" ry="0.7" fill="#ee8c8c" /><path d="M1302.4 400.2h1.3M1305.4 400.2h1.3" stroke="#5a3a18" stroke-width="0.8"/><polygon points="1188.1,376.7 1196.2,372.6 1207.1,376.7 1205.7,390.2 1190.8,390.2" fill="#f4e2a0" stroke="#b8a060" stroke-width="0.5"/><polygon points="1199.0,422.8 1199.6,424.4 1201.4,424.6 1200.1,425.8 1200.5,427.5 1199.0,426.6 1197.4,427.5 1197.8,425.8 1196.5,424.6 1198.3,424.4" fill="#f29a2e" /><polygon points="1207.1,428.2 1207.8,429.9 1209.6,430.0 1208.2,431.2 1208.6,432.9 1207.1,432.0 1205.6,432.9 1206.0,431.2 1204.6,430.0 1206.4,429.9" fill="#f29a2e" /><polygon points="1288.3,323.0 1288.9,324.4 1290.4,324.5 1289.3,325.5 1289.6,327.0 1288.3,326.2 1287.0,327.0 1287.4,325.5 1286.2,324.5 1287.7,324.4" fill="#f29a2e" /><rect x="1199.5" y="504.4" width="15" height="15.6" rx="2.5" fill="#25d0a6"/><text x="1202.3" y="517.6" font-size="13" font-weight="bold" fill="#0c1c1c" style="font-family:'Liberation Sans',sans-serif">R</text><text x="1217" y="519" font-size="15" fill="#e8e8e8" style="font-family:'Liberation Sans',sans-serif">B</text><text x="1262" y="519" font-size="15" fill="#e8e8e8" style="font-family:'Liberation Sans',sans-serif">gh</text></g></g>
<text x="1116.15" y="534" font-size="10.07" fill="#999" text-anchor="middle">1392 × 752</text>
<rect x="902.80" y="44.90" width="42.50" height="18.65" rx="3" fill="#383838"/>
<text x="909.80" y="58.10" font-size="11.2" fill="#AAA">2.832s</text>
<rect x="1278.43" y="43.50" width="49.77" height="18.65" rx="4" fill="#0f1c0f"/>
<text x="1284.23" y="56.80" font-size="11.85" fill="#EEE">#87</text>
<polygon points="1311.10,46.50 1313.60,49.10 1317.20,49.10 1319.70,46.50 1320.50,51.50 1319.80,53.90 1315.40,58.80 1311.00,53.90 1310.30,51.50" fill="#e8600e"/>
<polygon points="1310.30,51.70 1312.60,52.60 1314.20,54.50 1315.40,55.90 1316.60,54.50 1318.20,52.60 1320.50,51.70 1319.80,54.10 1315.40,58.80 1311.00,54.10" fill="#e4e4ea"/>
<circle cx="1313.30" cy="51.50" r="0.7" fill="#3a1a08"/>
<circle cx="1317.50" cy="51.50" r="0.7" fill="#3a1a08"/>
<polygon points="1314.50,57.30 1316.30,57.30 1315.40,58.80" fill="#666"/>
<rect x="509.50" y="611.70" width="373.40" height="214.50" rx="7.46" fill="rgba(0,0,0,0.5)" filter="url(#blur)"/>
<rect x="507.60" y="609.80" width="373.40" height="214.50" rx="7.46" fill="#353535"/>
<path d="M507.60 637.78V617.26A7.46 7.46 0 0 1 515.06 609.80H873.54A7.46 7.46 0 0 1 881.00 617.26V637.78Z" fill="#353535"/>
<rect x="507.60" y="636.78" width="373.40" height="1" fill="rgba(0,0,0,0.12)"/>
<circle cx="521.59" cy="623.79" r="4.66" fill="#808080"/>
<text x="535.58" y="628.45" font-size="13.06" fill="#999">Argos Translate Text Node</text>
<circle cx="872.47" cy="650.84" r="3.73" fill="#7DC81E"/>
<text x="863.15" y="655.50" font-size="11.19" fill="#AAA" text-anchor="end">text</text>
<rect x="521.59" y="662.40" width="345.42" height="18.65" rx="9.33" fill="#222" stroke="#666" stroke-width="0.93"/>
<path d="M536.51 667.06L527.19 671.73L536.51 676.39Z" fill="#DDD"/>
<path d="M852.09 667.06L861.41 671.73L852.09 676.39Z" fill="#DDD"/>
<text x="540.24" y="675.46" font-size="11.19" fill="#999">from_translate</text>
<text x="834.37" y="675.46" font-size="11.19" fill="#DDD" text-anchor="end">chinese</text>
<rect x="521.59" y="684.78" width="345.42" height="18.65" rx="9.33" fill="#222" stroke="#666" stroke-width="0.93"/>
<path d="M536.51 689.45L527.19 694.11L536.51 698.78Z" fill="#DDD"/>
<path d="M852.09 689.45L861.41 694.11L852.09 698.78Z" fill="#DDD"/>
<text x="540.24" y="697.84" font-size="11.19" fill="#999">to_translate</text>
<text x="834.37" y="697.84" font-size="11.19" fill="#DDD" text-anchor="end">english</text>
<circle cx="516.93" cy="716.00" r="3.73" fill="#7DC81E"/>
<text x="526.25" y="720.66" font-size="11.19" fill="#AAA">text</text>
<rect x="508.30" y="591.30" width="42.70" height="18.65" rx="3" fill="#383838"/>
<text x="515.30" y="604.50" font-size="11.2" fill="#AAA">2.306s</text>
<rect x="714.84" y="589.50" width="163.16" height="18.65" rx="4" fill="#0f1c0f"/>
<text x="720.64" y="602.80" font-size="11.85" fill="#EEE">#98 Custom_Nodes_AlekPet</text>
<rect x="43.40" y="644.10" width="410.80" height="196.80" rx="7.46" fill="rgba(0,0,0,0.5)" filter="url(#blur)"/>
<rect x="41.50" y="642.20" width="410.80" height="196.80" rx="7.46" fill="#333355"/>
<path d="M41.50 670.18V649.66A7.46 7.46 0 0 1 48.96 642.20H444.84A7.46 7.46 0 0 1 452.30 649.66V670.18Z" fill="#222233"/>
<circle cx="55.49" cy="656.19" r="4.66" fill="#808080"/>
<text x="91.40" y="660.85" font-size="13.06" fill="#999">CR Prompt Text</text>
<circle cx="78.1" cy="655.9" r="4.80" fill="#eee"/>
<rect x="76.70" y="649.90" width="2.8" height="3" fill="#eee" transform="rotate(0.0 78.1 655.9)"/>
<rect x="76.70" y="649.90" width="2.8" height="3" fill="#eee" transform="rotate(45.0 78.1 655.9)"/>
<rect x="76.70" y="649.90" width="2.8" height="3" fill="#eee" transform="rotate(90.0 78.1 655.9)"/>
<rect x="76.70" y="649.90" width="2.8" height="3" fill="#eee" transform="rotate(135.0 78.1 655.9)"/>
<rect x="76.70" y="649.90" width="2.8" height="3" fill="#eee" transform="rotate(180.0 78.1 655.9)"/>
<rect x="76.70" y="649.90" width="2.8" height="3" fill="#eee" transform="rotate(225.0 78.1 655.9)"/>
<rect x="76.70" y="649.90" width="2.8" height="3" fill="#eee" transform="rotate(270.0 78.1 655.9)"/>
<rect x="76.70" y="649.90" width="2.8" height="3" fill="#eee" transform="rotate(315.0 78.1 655.9)"/>
<circle cx="78.1" cy="655.9" r="1.6" fill="#222"/>
<circle cx="443.77" cy="683.24" r="3.73" fill="#7DC81E"/>
<text x="434.45" y="687.90" font-size="11.19" fill="#AAA" text-anchor="end">prompt</text>
<circle cx="443.77" cy="701.89" r="3.73" fill="#7DC81E"/>
<text x="434.45" y="706.56" font-size="11.19" fill="#AAA" text-anchor="end">show_help</text>
<rect x="50.3" y="721.1" width="392.1" height="108.1" fill="#222"/>
<rect x="50.3" y="721.1" width="2.8" height="108.1" fill="#bbb"/>
<path d="M56.7 725.0H62.6M56.5 726.7H61.6M56.7 728.4H60.9M56.6 730.0H61.6M56.2 731.7H60.9M55.8 733.4H60.8M56.4 725.4V731.5M59.8 725.8V733.0M62.5 724.6V731.4M55.6 733.4L58.6 729.4" stroke="#d0d0d0" stroke-width="0.7" fill="none"/><path d="M64.1 725.0H71.9M65.3 727.8H71.6M64.7 730.6H71.2M64.4 733.4H70.2M65.2 725.4V732.5M68.2 725.9V733.9" stroke="#d0d0d0" stroke-width="0.7" fill="none"/><path d="M73.9 725.0H79.4M73.9 727.1H79.0M74.9 729.2H79.9M75.1 731.3H79.8M75.3 733.4H81.0M74.1 725.8V731.5M77.5 725.5V732.4M74.0 733.4L77.0 729.4" stroke="#d0d0d0" stroke-width="0.7" fill="none"/><path d="M84.2 725.0H88.8M82.7 727.1H88.9M84.6 729.2H90.0M82.7 731.3H88.7M82.7 733.4H88.2M83.3 725.2V732.5M86.5 725.5V731.7" stroke="#d0d0d0" stroke-width="0.7" fill="none"/><path d="M92.5 725.0H99.9M91.7 727.8H99.5M93.8 730.6H98.8M93.9 733.4H97.3M92.8 725.7V733.0M95.6 725.9V731.9M92.5 733.4L95.5 729.4" stroke="#d0d0d0" stroke-width="0.7" fill="none"/><path d="M102.7 725.0H107.5M101.1 727.1H107.0M102.3 729.2H106.5M101.7 731.3H108.1M101.2 733.4H108.0M101.7 725.0V733.0M105.1 724.7V732.9M108.8 724.6V733.0M101.7 733.4L104.7 729.4" stroke="#d0d0d0" stroke-width="0.7" fill="none"/><path d="M112.1 725.0H117.3M111.0 726.7H116.0M110.2 728.4H118.2M110.6 730.0H117.6M110.7 731.7H117.9M111.4 733.4H116.5M111.8 725.9V731.7M114.5 725.4V732.9M110.9 733.4L113.9 729.4" stroke="#d0d0d0" stroke-width="0.7" fill="none"/><path d="M121.4 725.0H125.5M119.4 727.1H125.6M120.3 729.2H125.1M119.7 731.3H125.9M120.6 733.4H125.3M120.1 725.1V732.2M124.0 725.2V733.8M120.1 733.4L123.1 729.4" stroke="#d0d0d0" stroke-width="0.7" fill="none"/><path d="M129.6 725.0H135.1M129.2 727.8H134.2M129.9 730.6H134.4M128.7 733.4H135.0M130.4 724.5V732.8M133.2 725.8V733.2" stroke="#d0d0d0" stroke-width="0.7" fill="none"/><path d="M138.6 725.0H145.2M139.8 727.1H145.6M138.7 729.2H145.4M139.7 731.3H144.9M139.2 733.4H144.4M138.4 724.5V731.6M141.7 724.8V732.4M145.2 725.8V733.1M138.6 733.4L141.6 729.4" stroke="#d0d0d0" stroke-width="0.7" fill="none"/><path d="M148.8 725.0H152.8M148.7 726.7H152.7M148.3 728.4H153.9M147.5 730.0H154.4M148.1 731.7H154.2M149.0 733.4H153.3M148.0 724.6V732.9M151.4 725.5V732.3" stroke="#d0d0d0" stroke-width="0.7" fill="none"/><circle cx="158.2" cy="731.6" r="1.2" fill="none" stroke="#ddd" stroke-width="0.8"/><path d="M167.4 725.0H171.9M166.9 726.7H171.6M166.4 728.4H173.1M167.5 730.0H173.3M166.3 731.7H172.6M166.1 733.4H171.4M166.5 725.7V731.5M169.3 725.9V733.5M166.2 733.4L169.2 729.4" stroke="#d0d0d0" stroke-width="0.7" fill="none"/><path d="M175.3 725.0H180.8M175.6 726.7H181.9M175.7 728.4H181.1M176.5 730.0H182.8M175.7 731.7H180.5M174.7 733.4H182.5M176.1 724.8V732.3M179.2 725.2V733.0M175.5 733.4L178.5 729.4" stroke="#d0d0d0" stroke-width="0.7" fill="none"/><path d="M183.9 725.0H191.6M184.4 727.1H189.8M184.0 729.2H191.1M184.9 731.3H191.1M185.3 733.4H191.6M185.3 724.7V732.6M187.9 724.4V732.6" stroke="#d0d0d0" stroke-width="0.7" fill="none"/><path d="M193.6 725.0H200.7M194.3 727.1H201.2M194.2 729.2H201.3M193.5 731.3H200.9M194.6 733.4H199.3M194.8 725.5V731.7M197.4 725.3V733.7M193.9 733.4L196.9 729.4" stroke="#d0d0d0" stroke-width="0.7" fill="none"/><path d="M203.3 725.0H209.6M202.8 727.1H209.8M204.1 729.2H209.6M203.9 731.3H208.5M204.3 733.4H210.5M203.6 725.6V732.2M207.2 725.7V732.3M203.1 733.4L206.1 729.4" stroke="#d0d0d0" stroke-width="0.7" fill="none"/><path d="M212.3 725.0H218.2M212.1 726.7H219.5M212.0 728.4H219.4M212.5 730.0H217.2M212.7 731.7H218.9M213.6 733.4H218.4M213.2 725.2V733.1M215.9 725.7V732.8M219.4 725.5V732.5M212.3 733.4L215.3 729.4" stroke="#d0d0d0" stroke-width="0.7" fill="none"/><circle cx="222.8" cy="731.6" r="1.2" fill="none" stroke="#ddd" stroke-width="0.8"/>
<rect x="41.50" y="622.90" width="43.40" height="18.65" rx="3" fill="#383838"/>
<text x="48.50" y="636.10" font-size="11.2" fill="#AAA">0.213s</text>
<rect x="283.54" y="621.90" width="165.76" height="18.65" rx="4" fill="#0f1c0f"/>
<text x="289.34" y="635.20" font-size="11.85" fill="#EEE">#83 Comfyroll_CustomNodes</text>
<rect x="888.60" y="737.70" width="293.90" height="97.60" rx="7.46" fill="rgba(0,0,0,0.5)" filter="url(#blur)"/>
<rect x="886.70" y="735.80" width="293.90" height="97.60" rx="7.46" fill="#353535"/>
<path d="M886.70 763.78V743.26A7.46 7.46 0 0 1 894.16 735.80H1173.14A7.46 7.46 0 0 1 1180.60 743.26V763.78Z" fill="#353535"/>
<rect x="886.70" y="762.78" width="293.90" height="1" fill="rgba(0,0,0,0.12)"/>
<circle cx="900.69" cy="749.79" r="4.66" fill="#808080"/>
<text x="914.68" y="754.45" font-size="13.06" fill="#999">ShowText</text>
<text x="1161.95" y="781.50" font-size="11.19" fill="#AAA" text-anchor="end">text</text>
<rect x="1167.77" y="773.34" width="1.8" height="1.8" fill="#7DC81E"/>
<rect x="1167.77" y="775.94" width="1.8" height="1.8" fill="#7DC81E"/>
<rect x="1167.77" y="778.54" width="1.8" height="1.8" fill="#7DC81E"/>
<rect x="1170.37" y="773.34" width="1.8" height="1.8" fill="#7DC81E"/>
<rect x="1170.37" y="775.94" width="1.8" height="1.8" fill="#7DC81E"/>
<rect x="1170.37" y="778.54" width="1.8" height="1.8" fill="#7DC81E"/>
<rect x="1172.97" y="773.34" width="1.8" height="1.8" fill="#7DC81E"/>
<rect x="1172.97" y="775.94" width="1.8" height="1.8" fill="#7DC81E"/>
<rect x="1172.97" y="778.54" width="1.8" height="1.8" fill="#7DC81E"/>
<rect x="896" y="795.8" width="275.6" height="29.2" fill="#323232"/>
<circle cx="896.03" cy="796.90" r="3.73" fill="#7DC81E"/>
<text x="905.35" y="801.56" font-size="11.19" fill="#AAA">text</text>
<text x="898" y="806.5" style="font-family:'Liberation Mono',monospace" font-size="7.75" fill="#999">Help me generate three views.</text>
<rect x="887.00" y="716.60" width="43.30" height="18.65" rx="3" fill="#383838"/>
<text x="894.00" y="729.80" font-size="11.2" fill="#AAA">0.219s</text>
<rect x="1085.27" y="715.90" width="93.33" height="18.65" rx="4" fill="#0f1c0f"/>
<text x="1091.07" y="729.20" font-size="11.85" fill="#EEE">#103 Jjk-Nodes</text>
</svg>
</body></html>
